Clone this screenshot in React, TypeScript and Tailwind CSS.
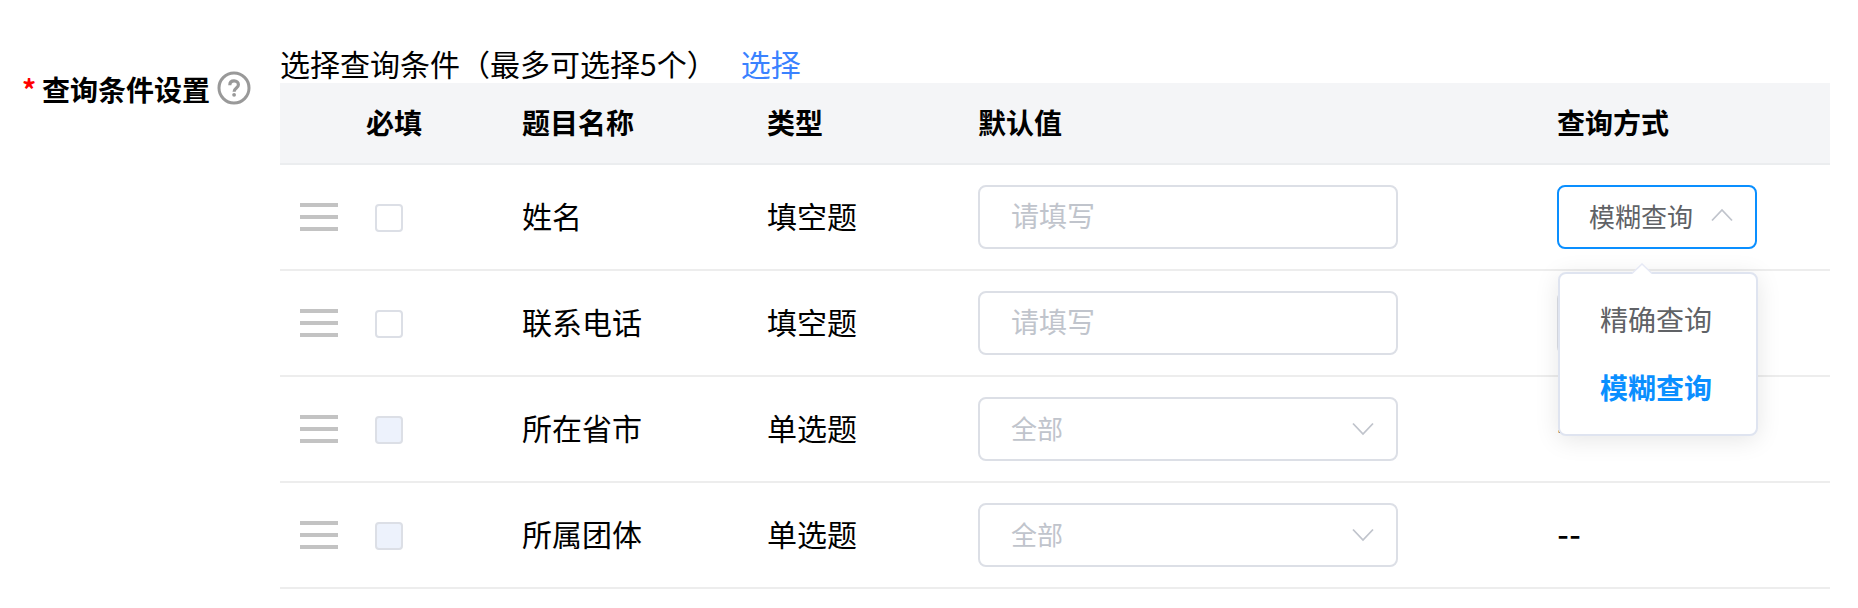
import clsx from "clsx";
import { useState } from "react";

type Field = {
  id: string;
  name: string;
  type: string;
  input: "text" | "select";
  requiredDisabled?: boolean;
};

const FIELDS: Field[] = [
  { id: "name", name: "姓名", type: "填空题", input: "text" },
  { id: "phone", name: "联系电话", type: "填空题", input: "text" },
  { id: "city", name: "所在省市", type: "单选题", input: "select", requiredDisabled: true },
  { id: "group", name: "所属团体", type: "单选题", input: "select", requiredDisabled: true },
];

const COLUMNS = ["必填", "题目名称", "类型", "默认值", "查询方式"];

const QUERY_MODES = ["精确查询", "模糊查询"];

function Chevron({ up = false }: { up?: boolean }) {
  return (
    <svg
      viewBox="0 0 22 14"
      className="pointer-events-none h-3.5 w-[22px] shrink-0"
      fill="none"
      stroke="#c0c4cc"
      strokeWidth="1.8"
      aria-hidden="true"
    >
      <path d={up ? "M1 12.5 11 2l10 10.5" : "M1 1.5 11 12 21 1.5"} />
    </svg>
  );
}

function HelpIcon() {
  return (
    <svg viewBox="0 0 34 34" className="h-[34px] w-[34px]" fill="none" stroke="#999" aria-hidden="true">
      <circle cx="17" cy="17" r="15" strokeWidth="3" />
      <path d="M12.8 14.2c0-2.7 1.8-4.3 4.3-4.3s4.3 1.6 4.3 3.9c0 3.3-4.3 3.2-4.3 7" strokeWidth="3.2" />
      <circle cx="17.1" cy="23.8" r="1.9" fill="#999" stroke="none" />
    </svg>
  );
}

function DragHandle() {
  return (
    <button type="button" aria-label="拖动排序" className="flex w-[38px] cursor-move flex-col gap-2">
      <span className="h-1 bg-[#c3c3c3]" />
      <span className="h-1 bg-[#c3c3c3]" />
      <span className="h-1 bg-[#c3c3c3]" />
    </button>
  );
}

function QueryModeSelect({ label, defaultOpen = false }: { label: string; defaultOpen?: boolean }) {
  const [open, setOpen] = useState(defaultOpen);
  const [value, setValue] = useState("模糊查询");

  return (
    <div className="relative w-[200px]">
      <button
        type="button"
        aria-label={`${label}查询方式`}
        aria-haspopup="listbox"
        aria-expanded={open}
        onClick={() => setOpen(!open)}
        className={clsx(
          "flex h-16 w-full items-center justify-between rounded-lg border-2 bg-white pr-[22px] pb-1 pl-[30px] text-[26px] text-[#606266]",
          open ? "border-[#0a8fff]" : "border-[#dcdfe6]",
        )}
      >
        {value}
        <Chevron up={open} />
      </button>
      {open && (
        <div className="absolute top-full left-px z-10 mt-[23px] w-[200px] rounded-lg border-2 border-[#dfe4f0] bg-white py-3 shadow-[0_4px_24px_rgba(0,0,0,0.1)]">
          <svg viewBox="0 0 24 12" className="absolute -top-[11px] left-[70px] h-3 w-6" aria-hidden="true">
            <path d="M1 12 12 1l11 11z" fill="#fff" />
            <path d="M2 10.5 12 1l10 9.5" fill="none" stroke="#e6e9f5" strokeWidth="1.5" />
          </svg>
          <ul role="listbox" aria-label={`${label}查询方式`}>
            {QUERY_MODES.map((mode) => (
              <li
                key={mode}
                role="option"
                aria-selected={mode === value}
                onClick={() => {
                  setValue(mode);
                  setOpen(false);
                }}
                className={clsx(
                  "h-[68px] cursor-pointer px-10 text-[28px] leading-[66px] whitespace-nowrap",
                  mode === value ? "font-bold text-[#0a8fff]" : "text-[#606266]",
                )}
              >
                {mode}
              </li>
            ))}
          </ul>
        </div>
      )}
    </div>
  );
}

function DefaultValue({ field }: { field: Field }) {
  if (field.input === "text") {
    return (
      <input
        type="text"
        aria-label={`${field.name}默认值`}
        placeholder="请填写"
        className="block h-16 w-[420px] max-w-full rounded-lg border-2 border-[#dcdfe6] px-[31px] pb-1 text-[28px] text-[#606266] outline-none placeholder:text-[#c0c4cc] focus:border-[#0a8fff]"
      />
    );
  }
  return (
    <div className="relative w-[420px] max-w-full">
      <select
        aria-label={`${field.name}默认值`}
        className="block h-16 w-full appearance-none rounded-lg border-2 border-[#dcdfe6] bg-white px-[31px] pb-1 text-[26px] text-[#c0c4cc] outline-none focus:border-[#0a8fff]"
      >
        <option>全部</option>
      </select>
      <div className="pointer-events-none absolute inset-y-0 right-6 flex items-center">
        <Chevron />
      </div>
    </div>
  );
}

export default function App() {
  return (
    <main className="flex min-h-screen bg-white pr-7 pl-[22px] font-['Noto_Sans_CJK_SC',sans-serif] text-black">
      <div className="flex w-[258px] shrink-0 items-start pt-[71px]">
        <span className="w-5 text-[28px] leading-9 font-bold text-[#ff0000]">*</span>
        <span className="text-[28px] leading-9 font-bold">查询条件设置</span>
        <button type="button" aria-label="帮助" className="ml-[7px]">
          <HelpIcon />
        </button>
      </div>

      <section className="min-w-0 flex-1 pt-[45px]">
        <div className="flex gap-6 pb-0.5 text-[30px] leading-9">
          <p>选择查询条件（最多可选择5个）</p>
          <a href="#fields" className="text-[#3a82ff]">
            选择
          </a>
        </div>

        <table id="fields" className="w-full table-fixed border-separate border-spacing-0 text-left">
          <colgroup>
            <col className="w-[86px]" />
            <col className="w-[156px]" />
            <col className="w-[245px]" />
            <col className="w-[211px]" />
            <col />
            <col className="w-[273px]" />
          </colgroup>
          <thead>
            <tr className="h-[82px] bg-[#f4f5f7] text-[28px] [&>th]:border-b-2 [&>th]:border-[#ebedef]">
              <th aria-label="排序" />
              {COLUMNS.map((column) => (
                <th key={column} className="pb-0.5 font-bold">
                  {column}
                </th>
              ))}
            </tr>
          </thead>
          <tbody>
            {FIELDS.map((field, index) => (
              <tr key={field.id} className="h-[106px] text-[30px] [&>td]:border-b-2 [&>td]:border-[#ededed]">
                <td className="pl-5">
                  <DragHandle />
                </td>
                <td className="pt-0.5 pl-[9px]">
                  <input
                    type="checkbox"
                    aria-label={`${field.name}必填`}
                    disabled={field.requiredDisabled}
                    className="block h-7 w-7 appearance-none rounded border-2 border-[#dcdfe6] bg-white checked:bg-[#0a8fff] disabled:bg-[#edf2fc]"
                  />
                </td>
                <td className="pb-1">{field.name}</td>
                <td className="pb-1">{field.type}</td>
                <td>
                  <DefaultValue field={field} />
                </td>
                {field.input === "text" ? (
                  <td>
                    <QueryModeSelect label={field.name} defaultOpen={index === 0} />
                  </td>
                ) : (
                  <td className="font-['Inter',sans-serif] text-[26px] font-semibold">--</td>
                )}
              </tr>
            ))}
          </tbody>
        </table>
      </section>
    </main>
  );
}
